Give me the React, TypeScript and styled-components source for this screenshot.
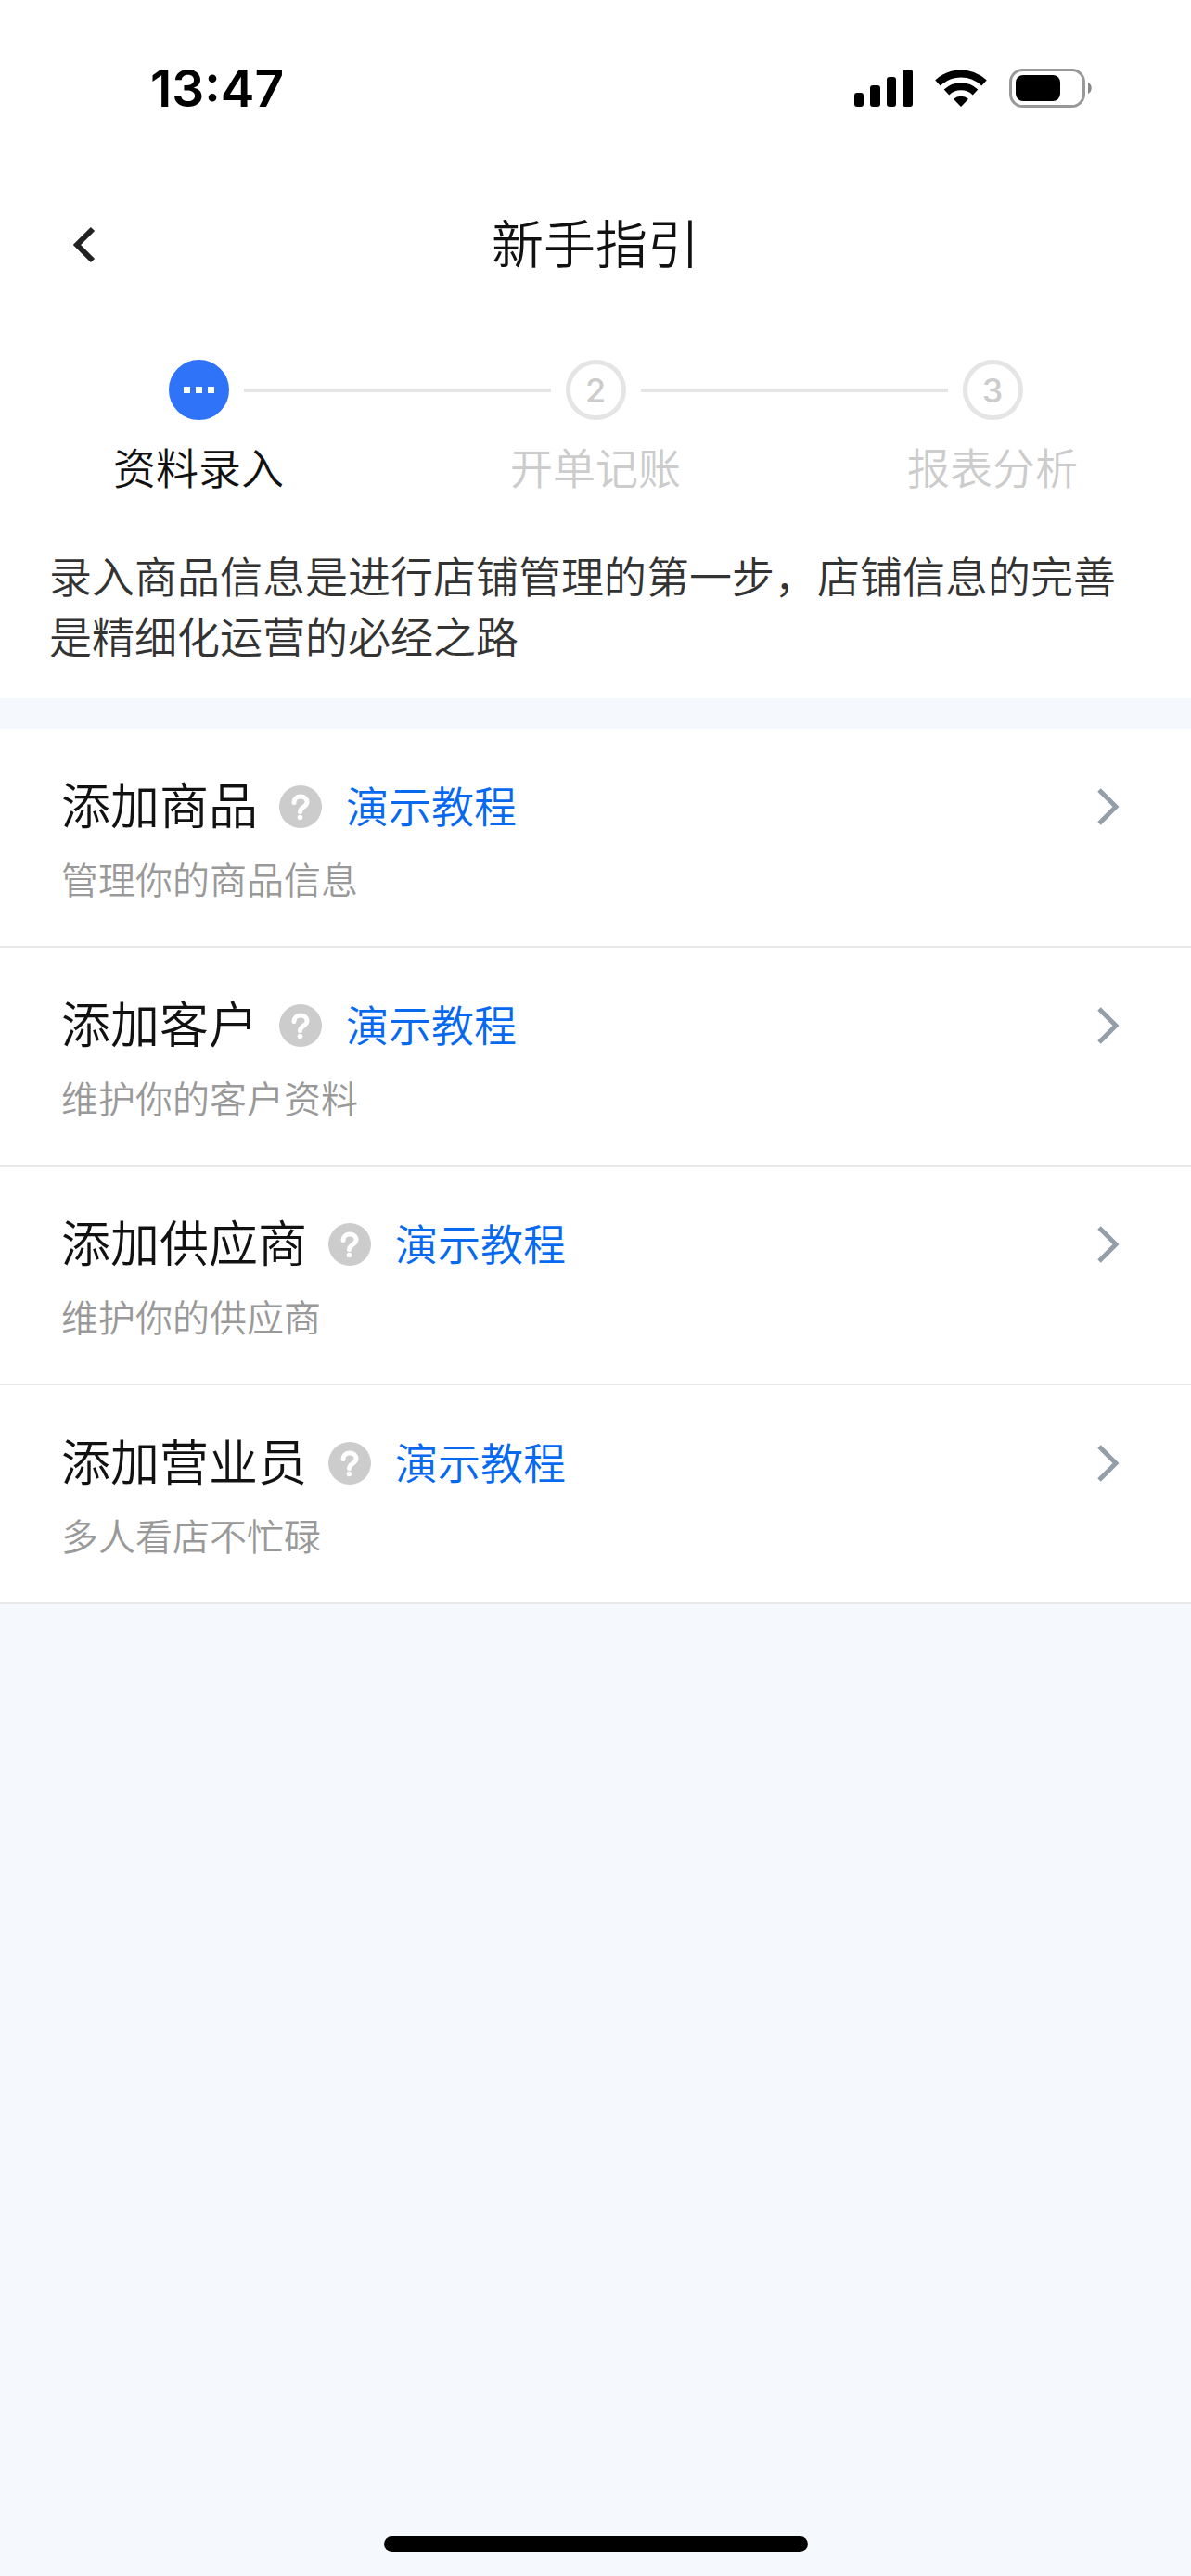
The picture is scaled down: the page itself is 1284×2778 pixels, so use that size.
import React from 'react';
import styled, { createGlobalStyle } from 'styled-components';

const GlobalStyle = createGlobalStyle`
  *, *::before, *::after { box-sizing: border-box; }
  body {
    margin: 0;
    background: #f5f8fd;
    color: #111;
    font-family: Inter, "Noto Sans CJK SC", sans-serif;
    font-weight: 350;
  }
  h1, h2, p, ol, ul { margin: 0; padding: 0; font-weight: inherit; }
  ol, ul { list-style: none; }
  button { border: 0; padding: 0; background: none; color: inherit; font: inherit; cursor: pointer; }
`;

const Page = styled.div`
  display: flex;
  flex-direction: column;
  min-height: 100vh;
`;

const Top = styled.div`
  background: #fff;
`;

const StatusBar = styled.div`
  display: flex;
  align-items: center;
  justify-content: space-between;
  height: 190px;
  padding: 0 106px 0 162px;
`;

const Clock = styled.time`
  font-size: 55px;
  line-height: 64px;
  font-weight: 600;
  color: #000;
`;

const StatusIcons = styled.div`
  display: flex;
  align-items: center;
  gap: 24px;

  svg { display: block; }
`;

const NavBar = styled.header`
  display: grid;
  grid-template-columns: 1fr auto 1fr;
  align-items: center;
  height: 148px;
  padding: 0 61px;
`;

const BackButton = styled.button`
  justify-self: start;
  display: flex;
  align-items: center;
  justify-content: center;
  width: 60px;
  height: 80px;
`;

const Title = styled.h1`
  font-size: 56px;
  line-height: 80px;
`;

const Steps = styled.ol`
  display: grid;
  grid-template-columns: repeat(3, 1fr);
  padding-top: 50px;
`;

const Step = styled.li<{ $active?: boolean }>`
  display: grid;
  grid-template-columns: 1fr auto 1fr;
  align-items: center;
  column-gap: 16px;
  row-gap: 20px;
  color: ${(p) => (p.$active ? '#111' : '#ccc')};
`;

const Connector = styled.span<{ $visible: boolean }>`
  height: 4px;
  background: ${(p) => (p.$visible ? '#e5e5e5' : 'transparent')};
`;

const Marker = styled.span<{ $active?: boolean }>`
  display: flex;
  align-items: center;
  justify-content: center;
  gap: 6px;
  width: 65px;
  height: 65px;
  border: 5px solid ${(p) => (p.$active ? '#2e73f8' : '#e5e5e5')};
  border-radius: 50%;
  background: ${(p) => (p.$active ? '#2e73f8' : '#fff')};
  font-size: 36px;
  line-height: 36px;
  font-weight: 500;
`;

const Dot = styled.i`
  width: 7px;
  height: 7px;
  background: #fff;
`;

const StepLabel = styled.span`
  grid-column: 1 / -1;
  text-align: center;
  font-size: 46px;
  line-height: 65px;
`;

const Intro = styled.p`
  padding: 52px 53px 33px;
  color: #333;
  font-size: 46px;
  line-height: 65px;
`;

const List = styled.ul`
  margin-top: 33px;
  background: #fff;
`;

const Row = styled.li`
  display: flex;
  align-items: flex-start;
  justify-content: space-between;
  height: 236px;
  padding: 48px 77px 0 66px;
  border-bottom: 2px solid #e8e8e8;
`;

const RowHead = styled.div`
  display: flex;
  align-items: center;
  height: 72px;
`;

const RowTitle = styled.h2`
  font-size: 53px;
  line-height: 72px;
`;

const HelpButton = styled.button`
  display: flex;
  margin: 0 26px 0 23px;
`;

const DemoLink = styled.a`
  color: #0669f0;
  font-size: 46px;
  line-height: 65px;
  text-decoration: none;
`;

const RowText = styled.p`
  margin-top: 14px;
  color: #999;
  font-size: 40px;
  line-height: 60px;
`;

const OpenButton = styled.button`
  display: flex;
  align-items: center;
  height: 72px;
`;

const HomeIndicator = styled.div`
  width: 457px;
  height: 17px;
  margin: auto auto 26px;
  border-radius: 9px;
  background: #000;
`;

const SignalIcon = () => (
  <svg width="63" height="42" viewBox="0 0 63 42" aria-hidden="true">
    <rect x="0" y="26" width="10" height="15" rx="3" />
    <rect x="17" y="18" width="11" height="23" rx="3" />
    <rect x="35" y="9" width="10" height="32" rx="3" />
    <rect x="52" y="1" width="11" height="40" rx="3" />
  </svg>
);

const WifiIcon = () => (
  <svg width="56" height="42" viewBox="0 0 56 42" aria-hidden="true">
    <path d="M3 15.500a36 36 0 0 1 50 0" fill="none" stroke="#000" strokeWidth="8" />
    <path d="M12.500 25.500a22.500 22.500 0 0 1 31 0" fill="none" stroke="#000" strokeWidth="8" />
    <path d="M28 41l-8-8.200a12 12 0 0 1 16 0z" />
  </svg>
);

const BatteryIcon = () => (
  <svg width="90" height="42" viewBox="0 0 90 42" aria-hidden="true">
    <rect x="1.500" y="1.500" width="79" height="39" rx="13" fill="none" stroke="#999" strokeWidth="3" />
    <rect x="7" y="7" width="48" height="28" rx="8" />
    <path d="M85 15c5 2 5 10 0 12z" fill="#888" />
  </svg>
);

const BackIcon = () => (
  <svg width="24" height="40" viewBox="0 0 24 40" fill="none" stroke="#222" strokeWidth="6" aria-hidden="true">
    <path d="M21 3L4 20l17 17" />
  </svg>
);

const HelpIcon = () => (
  <svg width="46" height="46" viewBox="0 0 46 46" fill="none" aria-hidden="true">
    <circle cx="23" cy="23" r="23" fill="#ccc" />
    <path d="M16 18.500c0-4 3-6.500 7-6.500s7 2.500 7 6c0 5-7.500 5.500-7.500 10.500" stroke="#fff" strokeWidth="5" strokeLinecap="round" />
    <circle cx="22.500" cy="34.500" r="2.800" fill="#fff" />
  </svg>
);

const ChevronIcon = () => (
  <svg width="24" height="42" viewBox="0 0 24 42" fill="none" stroke="#949ea8" strokeWidth="5" aria-hidden="true">
    <path d="M2 3l18 18L2 39" />
  </svg>
);

const steps = ['资料录入', '开单记账', '报表分析'];

const tasks = [
  { title: '添加商品', text: '管理你的商品信息' },
  { title: '添加客户', text: '维护你的客户资料' },
  { title: '添加供应商', text: '维护你的供应商' },
  { title: '添加营业员', text: '多人看店不忙碌' },
];

export default function App() {
  return (
    <>
      <GlobalStyle />
      <Page lang="zh-CN">
        <Top>
          <StatusBar>
            <Clock>13:47</Clock>
            <StatusIcons>
              <SignalIcon />
              <WifiIcon />
              <BatteryIcon />
            </StatusIcons>
          </StatusBar>
          <NavBar>
            <BackButton type="button" aria-label="返回">
              <BackIcon />
            </BackButton>
            <Title>新手指引</Title>
          </NavBar>
          <Steps>
            {steps.map((label, i) => {
              const active = i === 0;
              return (
                <Step key={label} $active={active} aria-current={active ? 'step' : undefined}>
                  <Connector $visible={i > 0} />
                  <Marker $active={active}>{active ? <><Dot /><Dot /><Dot /></> : i + 1}</Marker>
                  <Connector $visible={i < steps.length - 1} />
                  <StepLabel>{label}</StepLabel>
                </Step>
              );
            })}
          </Steps>
          <Intro>录入商品信息是进行店铺管理的第一步，店铺信息的完善是精细化运营的必经之路</Intro>
        </Top>
        <List>
          {tasks.map((task) => (
            <Row key={task.title}>
              <div>
                <RowHead>
                  <RowTitle>{task.title}</RowTitle>
                  <HelpButton type="button" aria-label={`${task.title}帮助`}>
                    <HelpIcon />
                  </HelpButton>
                  <DemoLink href="#demo">演示教程</DemoLink>
                </RowHead>
                <RowText>{task.text}</RowText>
              </div>
              <OpenButton type="button" aria-label={task.title}>
                <ChevronIcon />
              </OpenButton>
            </Row>
          ))}
        </List>
        <HomeIndicator />
      </Page>
    </>
  );
}
